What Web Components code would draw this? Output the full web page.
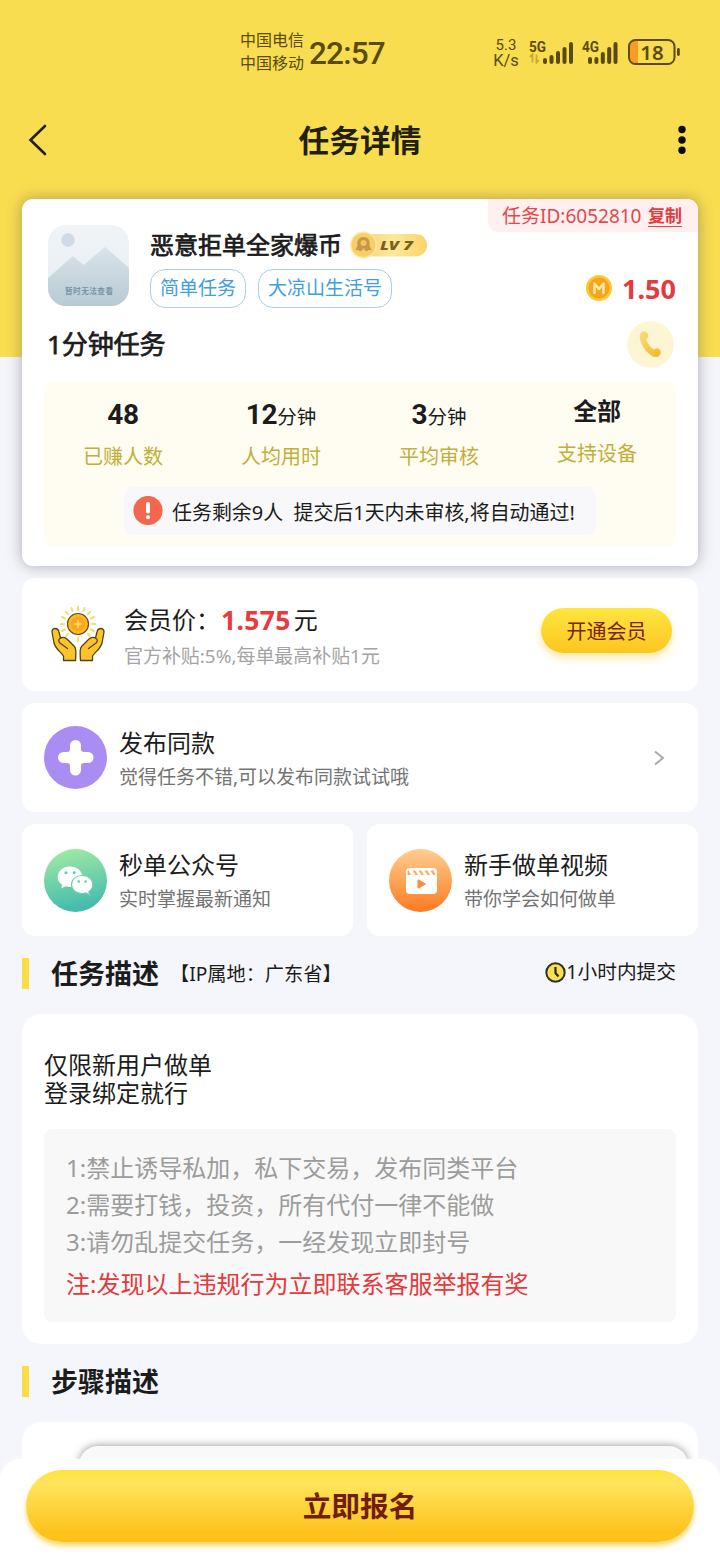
<!DOCTYPE html>
<html lang="zh-CN">
<head>
<meta charset="utf-8">
<title>任务详情</title>
<style>
html,body{margin:0;padding:0}
body{width:720px;height:1560px;overflow:hidden;font-family:"Noto Sans","Noto Sans CJK SC",sans-serif;color:#1c1c1c;-webkit-font-smoothing:antialiased}
</style>
</head>
<body>
<task-page>
  <status-bar slot="top"></status-bar>
  <nav-bar slot="top">任务详情</nav-bar>
  <task-card>
    <task-stat><b>48</b><span slot="label">已赚人数</span></task-stat>
    <task-stat unit="分钟"><b>12</b><span slot="label">人均用时</span></task-stat>
    <task-stat unit="分钟"><b>3</b><span slot="label">平均审核</span></task-stat>
    <task-stat cjk><b>全部</b><span slot="label">支持设备</span></task-stat>
    <task-notice slot="notice">任务剩余9人&nbsp; 提交后1天内未审核,将自动通过!</task-notice>
  </task-card>
  <member-card></member-card>
  <link-card class="wide" arrow>
    <app-icon slot="icon" kind="plus"></app-icon>
    <span slot="title">发布同款</span><span slot="sub">觉得任务不错,可以发布同款试试哦</span>
  </link-card>
  <card-pair>
    <link-card><app-icon slot="icon" kind="chat"></app-icon>
      <span slot="title">秒单公众号</span><span slot="sub">实时掌握最新通知</span></link-card>
    <link-card><app-icon slot="icon" kind="video"></app-icon>
      <span slot="title">新手做单视频</span><span slot="sub">带你学会如何做单</span></link-card>
  </card-pair>
  <section-head>任务描述<span slot="note">【IP属地：广东省】</span><clock-note slot="end">1小时内提交</clock-note></section-head>
  <desc-card></desc-card>
  <section-head>步骤描述</section-head>
  <steps-card></steps-card>
  <action-bar slot="bottom">立即报名</action-bar>
</task-page>
<script>
const define=(name,html)=>customElements.define(name,class extends HTMLElement{
  constructor(){super();
    const t=document.createElement('template');
    t.innerHTML=typeof html==='function'?html(this):html;
    this.attachShadow({mode:'open'}).append(t.content.cloneNode(true));
  }
});

define('task-page',`<style>
:host{display:flex;flex-direction:column;position:relative;width:720px;height:1560px;overflow:hidden;background:linear-gradient(#f9dd50 0 357px,#f5f6fb 357px)}
main{display:flex;flex-direction:column;padding:0 22px}
</style><slot name="top"></slot><main><slot></slot></main><slot name="bottom"></slot>`);

define('status-bar',`<style>
:host{display:flex;flex:none;height:100px;box-sizing:border-box;padding:29px 40px 0 240px;color:#5a4b0c;align-items:flex-start}
.op{font-size:16px;line-height:22.5px}
.time{font:500 31.5px/46px Roboto,sans-serif;margin:2px 0 0 5px;width:183px;letter-spacing:-.8px}
.speed{font:400 15px/15px Roboto,sans-serif;text-align:center;width:28px;margin-top:9px;white-space:nowrap}
.k{font-size:16.500px}
svg{display:block}
.sig{margin:9px 0 0 9px}
.sig+.sig{margin-left:8px}
.bat{margin:10px 0 0 10px;position:relative;width:52px;height:26px}
.bat span{position:absolute;left:0;top:0;width:48px;text-align:center;font:600 20.500px/26px "Noto Sans",sans-serif}
</style>
<div class="op"><div>中国电信</div><div>中国移动</div></div>
<div class="time">22:57</div>
<div class="speed">5.3<br><span class="k">K/s</span></div>
<svg class="sig" width="45" height="30" viewBox="0 0 45 30"><text x="0" y="14" font-family="Roboto" font-weight="700" font-size="15" fill="#5a4b0c" textLength="17" lengthAdjust="spacingAndGlyphs">5G</text>
<g stroke="#5a4b0c" stroke-width="4" stroke-linecap="round"><path d="M16 24v-2M22.500 24v-5M29 24v-9M35.500 24v-13M42 24v-18"/></g><path d="M1 19l2.500-2.500v8M7.500 16.500v8L10 22" stroke="#c6ab36" stroke-width="1.800" fill="none"/></svg>
<svg class="sig" width="36" height="30" viewBox="0 0 36 30"><text x="0" y="14" font-family="Roboto" font-weight="700" font-size="15" fill="#5a4b0c" textLength="17" lengthAdjust="spacingAndGlyphs">4G</text>
<g stroke="#5a4b0c" stroke-width="4" stroke-linecap="round"><path d="M8 24v-3M14.400 24v-3M20.800 24v-8M27.200 24v-13M33.500 24v-18"/></g></svg>
<div class="bat"><svg width="52" height="26" viewBox="0 0 52 26"><path d="M10 2H7a5 5 0 0 0-5 5v12a5 5 0 0 0 5 5h3z" fill="#fb9a25"/><rect x="1" y="1" width="45.500" height="24" rx="6.500" fill="none" stroke="#5a4b0c" stroke-width="2"/><rect x="49" y="9" width="2.800" height="8" rx="1.400" fill="#5a4b0c"/></svg><span>18</span></div>`);

define('nav-bar',`<style>
:host{display:flex;flex:none;height:99px;box-sizing:border-box;padding:0 32px 19px 28px;align-items:center;justify-content:space-between;color:#231f10}
h1{margin:0;font-size:30.700px;line-height:40px;font-weight:700;padding-right:4px}
svg{display:block}
</style>
<svg width="20" height="32" viewBox="0 0 20 32"><path d="M17 2L2.500 16 17 30" fill="none" stroke="#231f10" stroke-width="2.600" stroke-linecap="round"/></svg>
<h1><slot></slot></h1>
<svg width="12" height="30" viewBox="0 0 12 30"><g fill="#0d0d08"><circle cx="6" cy="4.500" r="3.700"/><circle cx="6" cy="15" r="3.700"/><circle cx="6" cy="25.300" r="3.700"/></g></svg>`);

define('task-card',`<style>
:host{display:flex;flex-direction:column;position:relative;box-sizing:border-box;height:367px;padding:26px 22px 19px;border-radius:11px;background:#fff;box-shadow:0 0 15px rgba(70,70,90,.42);z-index:1}
svg{display:block}
.id{position:absolute;right:0;top:0;height:33px;width:210px;box-sizing:border-box;padding:0 16px 0 14px;border-radius:0 11px 0 11px;background:#fff0ef;color:#e2494c;font-size:19px;line-height:34px;display:flex;justify-content:space-between;white-space:nowrap}
.id b{font-size:17px;line-height:23px;height:22px;margin-top:5px;border-bottom:1.500px solid #d8474a;color:#e23b3e}
.top{display:flex;padding-left:4px;height:81px}
.info{flex:1;margin-left:21px}
.name{display:flex;align-items:center;height:40px}
.name strong{font-size:24px;line-height:40px;font-weight:400;-webkit-text-stroke:.75px #1c1c1c}
.lv{margin-left:8px;position:relative}
.row{display:flex;align-items:center;margin-top:4px;height:39px}
.tag{box-sizing:border-box;height:39px;line-height:36px;border:1px solid #a6cfea;border-radius:15px;padding:0 9px;font-size:19px;color:#40a0de;margin-right:12px;white-space:nowrap}
.price{display:flex;align-items:center;margin-left:auto;color:#e5393c;font-weight:700;font-size:27px;line-height:37px}
.price span{margin-top:-1px}
.price svg{margin-right:9px;margin-top:-1px}
.second{display:flex;justify-content:space-between;align-items:center;height:47px;margin:15px 2px 0 3px}
.second h2{margin:-1px 0 0;font-size:26px;line-height:40px;font-weight:400;letter-spacing:-.1px;-webkit-text-stroke:.75px #1c1c1c}
.panel{margin-top:14px;height:165px;background:#fffcf2;border-radius:8px;display:flex;flex-direction:column;align-items:center}
.stats{display:grid;grid-template-columns:repeat(4,158px);height:105px}
</style>
<div class="id"><span>任务ID:6052810</span><b>复制</b></div>
<div class="top">
<svg width="81" height="81" viewBox="0 0 81 81"><defs><linearGradient id="a" x2="0" y2="1"><stop stop-color="#f0f4f7"/><stop offset="1" stop-color="#e6edf2"/></linearGradient><linearGradient id="m" x2="0" y2="1"><stop stop-color="#dae3e9"/><stop offset="1" stop-color="#b7cad4"/></linearGradient><clipPath id="c"><rect width="81" height="81" rx="18"/></clipPath></defs>
<g clip-path="url(#c)"><rect width="81" height="81" fill="url(#a)"/><circle cx="20" cy="15" r="6.800" fill="#d0dbe3"/><path d="M0 53L25 31 35.500 40 57 22 81 43V81H0z" fill="url(#m)"/></g>
<text x="17" y="69" font-size="7.600" font-weight="700" fill="#7795a5" textLength="48" font-family="Noto Sans CJK SC">暂时无法查看</text></svg>
<div class="info">
<div class="name"><strong>恶意拒单全家爆币</strong>
<svg class="lv" width="78" height="28" viewBox="0 0 78 28"><defs><linearGradient id="g"><stop stop-color="#fbd276"/><stop offset=".5" stop-color="#fde99a"/><stop offset="1" stop-color="#fbd368"/></linearGradient></defs><rect x="10" y="3" width="67" height="22.500" rx="11" fill="url(#g)"/><circle cx="13.500" cy="14" r="12.700" fill="#f8ce66" stroke="#ffe7a5" stroke-width="1.500"/><path d="M9 19.500c-2-1-2.500 0-3.500-.5l2-4.500c-1-5.500 2-8.500 6-8.500s7 3 6 8.500l2 4.500c-1.500.6-2.500-.5-3.500.5-1 .8-2.500 1-3.500-.8l-1-1.700-1 1.700c-1 1.800-2.500 1.600-3.500.8z" fill="#c69849"/><circle cx="13.500" cy="12" r="3" fill="#f3c35f"/><text x="30" y="18.500" font-family="Open Sans" font-weight="800" font-style="italic" font-size="12.500" fill="#7b6020" textLength="33" lengthAdjust="spacingAndGlyphs" xml:space="preserve">LV 7</text></svg></div>
<div class="row"><span class="tag">简单任务</span><span class="tag">大凉山生活号</span>
<div class="price"><svg width="28" height="28" viewBox="0 0 28 28"><circle cx="14" cy="14" r="13" fill="#fcc735"/><circle cx="14" cy="14" r="10.500" fill="#f5a51c"/><path d="M9.500 19V9.500L14 15l4.500-5.500V19" fill="none" stroke="#ffe9a8" stroke-width="2.500" stroke-linejoin="round" stroke-linecap="round"/></svg><span>1.50</span></div></div>
</div></div>
<div class="second"><h2>1分钟任务</h2>
<svg width="47" height="47" viewBox="0 0 47 47"><defs><linearGradient id="p" x2="1" y2="1"><stop stop-color="#fbdf7c"/><stop offset="1" stop-color="#f5b722"/></linearGradient></defs><circle cx="23.500" cy="23.500" r="23.300" fill="#fef5d5"/><path d="M14 11.500c2-2 5-1.500 6.500 1 1 2 .8 4-.7 5.600-.5.600-.5 1.300 0 2.200 1.500 3.200 3.500 5.700 6 7.700.8.600 1.400.6 2.100.1 2-1.500 4-1 5.200.8 1.300 2.200.5 4.700-1.600 6.300-2.200 1.500-4.700 1-7-.5-6-4-10-10-11.500-16.700-.5-2.500-.4-5 1-6.500z" fill="url(#p)"/></svg></div>
<div class="panel"><div class="stats"><slot></slot></div><slot name="notice"></slot></div>`);

define('task-stat',h=>`<style>
:host{display:flex;flex-direction:column;align-items:center;padding-top:13px;white-space:nowrap}
:host([cjk]){padding-top:9px}
.v{display:flex;align-items:baseline;height:40px;line-height:40px;font-size:19.500px}
::slotted(b){font:700 28px/40px Roboto,"Noto Sans CJK SC",sans-serif;letter-spacing:-.3px}
:host([cjk]) ::slotted(b){font:700 24px/40px "Noto Sans","Noto Sans CJK SC",sans-serif}
::slotted(span){font-size:20px;line-height:40px;color:#c3ae3a;margin-top:2px}
:host([cjk]) ::slotted(span){margin-top:3px}
</style><div class="v"><slot></slot>${h.getAttribute('unit')?`<span>${h.getAttribute('unit')}</span>`:''}</div><slot name="label"></slot>`);

define('task-notice',`<style>
:host{display:flex;align-items:center;width:472px;height:48px;box-sizing:border-box;padding-left:9px;border-radius:8px;background:#f8f8fa;font-size:19.950px;color:#1c1c1c;white-space:nowrap}
svg{display:block;margin-right:9px;flex:none}
</style><svg width="30" height="30" viewBox="0 0 30 30"><circle cx="15" cy="14.500" r="14.600" fill="#f4674f"/><path d="M15 8v7.500" stroke="#fff" stroke-width="4" stroke-linecap="round"/><circle cx="15" cy="21.300" r="2" fill="#fff"/></svg><span><slot></slot></span>`);

define('member-card',`<style>
:host{display:flex;height:113px;margin-top:12px;background:#fff;border-radius:13px;box-sizing:border-box;padding:0 26px 0 28px}
svg{display:block;margin-top:27px;flex:none}
.t{margin-left:18px;flex:1;padding-top:22px;white-space:nowrap}
.a{display:flex;font-size:24px;line-height:40px}
.a b{font-size:26.500px;color:#e93a3d;margin-right:3px;margin-left:1px;letter-spacing:.35px}
.b{font-size:18.950px;line-height:32px;color:#a4a4a4}
button{all:unset;box-sizing:border-box;width:131px;height:45px;margin-top:30px;border-radius:23px;text-align:center;font-size:20px;line-height:48px;color:#7a2208;background:linear-gradient(#fee640,#fdc51f);box-shadow:0 5px 8px rgba(255,205,50,.42)}
</style>
<svg width="56" height="58" viewBox="0 0 56 58"><g stroke="#f0df62" stroke-width="2" stroke-linecap="round"><path d="M28 2v3M28 33v3M11 19h3M42 19h3M16 7l2 2M40 7l-2 2M16 31l2-2M40 31l-2-2M21.500 3l1 3M34.500 3l-1 3M12 12l3 1.500M44 12l-3 1.500M12 26l3-1.500M44 26l-3-1.500"/></g>
<circle cx="28" cy="19" r="10.500" fill="#f9bd2b" stroke="#6b4a13" stroke-width="1.200"/><circle cx="28" cy="19" r="7.500" fill="#f9a91e"/><path d="M28 14l1.300 3.700L33 19l-3.700 1.300L28 24l-1.300-3.700L23 19l3.700-1.300z" fill="#ffd65b"/>
<g fill="#fbc42d" stroke="#59400f" stroke-width="1.300" stroke-linejoin="round" stroke-linecap="round"><path d="M2 27c-.3-4.500 6-4.800 7 0l1.500 6c3-1.500 6 0 9 3.500l4.500 4.500c2 2 2.200 4.500 1.500 14.500H13.500v-4.500C10 46 5.500 44 4 38z"/><path d="M10.500 33c-2.300 1-2.300 3.800-.3 5.200l7.300 5.300" fill="none"/></g>
<g transform="matrix(-1 0 0 1 56 0)" fill="#fbc42d" stroke="#59400f" stroke-width="1.300" stroke-linejoin="round" stroke-linecap="round"><path d="M2 27c-.3-4.500 6-4.800 7 0l1.500 6c3-1.500 6 0 9 3.500l4.500 4.500c2 2 2.200 4.500 1.500 14.500H13.500v-4.500C10 46 5.500 44 4 38z"/><path d="M10.500 33c-2.300 1-2.300 3.800-.3 5.200l7.300 5.300" fill="none"/></g></svg>
<div class="t"><div class="a">会员价：<b>1.575</b>元</div><div class="b">官方补贴:5%,每单最高补贴1元</div></div>
<button>开通会员</button>`);

define('app-icon',h=>{const k=h.getAttribute('kind');const art={
plus:`<circle cx="31.500" cy="31.500" r="31.500" fill="#a98df2"/><path d="M26 19.500a5.500 5.500 0 0 1 11 0v3.500q0 3 3 3h4a5.500 5.500 0 0 1 0 11h-4q-3 0-3 3v4a5.500 5.500 0 0 1-11 0v-4q0-3-3-3h-3.500a5.500 5.500 0 0 1 0-11h3.500q3 0 3-3z" fill="#fff"/>`,
chat:`<defs><linearGradient id="g" x2=".2" y2="1"><stop stop-color="#a6eca2"/><stop offset="1" stop-color="#45bcae"/></linearGradient></defs><circle cx="31.500" cy="31.500" r="31.500" fill="url(#g)"/><path d="M26 17.500c-7 0-12.300 4.600-12.300 10.400 0 3.400 1.700 6 4.500 7.900l-1 3.600 4.300-2.200c1.500.4 3 .7 4.500.7 7 0 12.300-4.300 12.300-10S33 17.500 26 17.500z" fill="#fff"/><circle cx="22" cy="23.800" r="1.500" fill="#64ccae"/><circle cx="30.200" cy="23.800" r="1.500" fill="#64ccae"/><path d="M38.200 26.500c-6 0-10.700 4-10.700 9s4.700 9 10.700 9c1.300 0 2.600-.2 3.700-.6l3.800 2-.9-3.300c2.500-1.700 4.100-4.200 4.100-7.100 0-5-4.700-9-10.700-9z" fill="#fff" stroke="#70cfb0" stroke-width="1.200"/><circle cx="34.700" cy="32.500" r="1.300" fill="#64ccae"/><circle cx="41.700" cy="32.500" r="1.300" fill="#64ccae"/>`,
video:`<defs><linearGradient id="g" x2="0" y2="1"><stop stop-color="#ffce90"/><stop offset="1" stop-color="#fc7a22"/></linearGradient></defs><circle cx="31.500" cy="31.500" r="31.500" fill="url(#g)"/><rect x="17" y="19" width="31" height="26" rx="4" fill="#fff"/><path d="M18.500 26v-4.500h1l2.500 4.500M23.500 21.500h2.700l2.800 4.500h-2.500zM29.500 21.500h2.700l2.800 4.500h-2.500zM35.500 21.500h2.700l2.800 4.500h-2.500zM41.500 21.500h2.700l2 3.500v1h-2z" fill="#fca862"/><path d="M28.500 31.500c0-1 .8-1.300 1.600-.8l6 3.500c.8.500.8 1.100 0 1.600l-6 3.500c-.8.500-1.600.2-1.600-.8z" fill="#fb8d3f"/>`};
return `<style>:host{display:block;width:63px;height:63px}svg{display:block}</style><svg width="63" height="63" viewBox="0 0 63 63">${art[k]}</svg>`});

define('link-card',h=>`<style>
:host{display:flex;align-items:center;box-sizing:border-box;height:112px;background:#fff;border-radius:13px;padding:0 33px 0 22px}
:host(.wide){height:109px;margin-top:12px}
.t{display:flex;flex-direction:column;margin-left:12px;flex:1;white-space:nowrap;padding-top:2px}
:host(.wide) .t{padding-top:2px}
::slotted([slot=title]){font-size:24px;line-height:36px}
::slotted([slot=sub]){font-size:19px;line-height:32px;color:#737373}
svg{display:block}
</style><slot name="icon"></slot><div class="t"><slot name="title"></slot><slot name="sub"></slot></div>${h.hasAttribute('arrow')?'<svg width="12" height="16" viewBox="0 0 12 16"><path d="M2 1.500l8 6.500-8 6.500" fill="none" stroke="#a9a9a9" stroke-width="1.900"/></svg>':''}`);

define('card-pair',`<style>:host{display:grid;grid-template-columns:331px 331px;gap:14px;margin-top:12px}</style><slot></slot>`);

define('section-head',`<style>
:host{display:flex;align-items:center;height:31px;margin-top:22px;padding-right:22px;white-space:nowrap}
i{width:7px;height:31px;background:#fadc45;margin-right:22px}
h2{margin:0;font-size:27px;line-height:31px;font-weight:700}
::slotted([slot=note]){font-size:19.200px;margin-left:11px;line-height:31px}
::slotted([slot=end]){margin-left:auto}
</style><i></i><h2><slot></slot></h2><slot name="note"></slot><slot name="end"></slot>`);

define('clock-note',`<style>:host{display:flex;align-items:center;font-size:19.700px;line-height:30px;margin-top:-3px}svg{display:block}</style>
<svg width="21" height="21" viewBox="0 0 21 21"><circle cx="10.500" cy="10.500" r="9.200" fill="#f8df55" stroke="#33302a" stroke-width="2"/><path d="M10.500 5v6l3 3.500" fill="none" stroke="#2b2822" stroke-width="2.200"/></svg><span><slot></slot></span>`);

define('desc-card',`<style>
:host{display:block;box-sizing:border-box;height:330px;margin-top:25px;background:#fff;border-radius:19px;padding:37px 22px 22px}
.d{font-size:24px;line-height:28px}
.n{margin-top:22px;height:193px;box-sizing:border-box;background:#f8f8f8;border-radius:8px;padding:20px 22px;font-size:24px;line-height:37px;color:#9c9c9c;white-space:nowrap}
.n .r{color:#e5393c;margin-top:5px}
</style><div class="d">仅限新用户做单<br>登录绑定就行</div>
<div class="n"><div>1:禁止诱导私加，私下交易，发布同类平台</div><div>2:需要打钱，投资，所有代付一律不能做</div><div>3:请勿乱提交任务，一经发现立即封号</div><div class="r">注:发现以上违规行为立即联系客服举报有奖</div></div>`);

define('steps-card',`<style>
:host{display:block;box-sizing:border-box;height:140px;margin-top:25px;background:#fff;border-radius:19px;padding:24px 10px 0 57px}
div{height:110px;border-radius:19px;background:#f9f9f9;box-shadow:0 0 8px rgba(0,0,0,.45)}
</style><div></div>`);

define('action-bar',`<style>
:host{display:flex;position:absolute;left:0;right:0;bottom:0;height:101px;box-sizing:border-box;padding:11px 26px 0;background:#fff;border-radius:20px 20px 0 0;z-index:2;box-shadow:0 0 12px rgba(255,255,255,.5)}
button{all:unset;box-sizing:border-box;flex:1;height:72px;border-radius:36px;text-align:center;font-size:28.700px;font-weight:700;line-height:72px;color:#731d08;background:linear-gradient(#fee43f,#fee55c 18%,#fdc21b 88%,#fdc31d);box-shadow:0 4px 5px rgba(254,205,60,.75)}
</style><button><slot></slot></button>`);
</script>
</body>
</html>
